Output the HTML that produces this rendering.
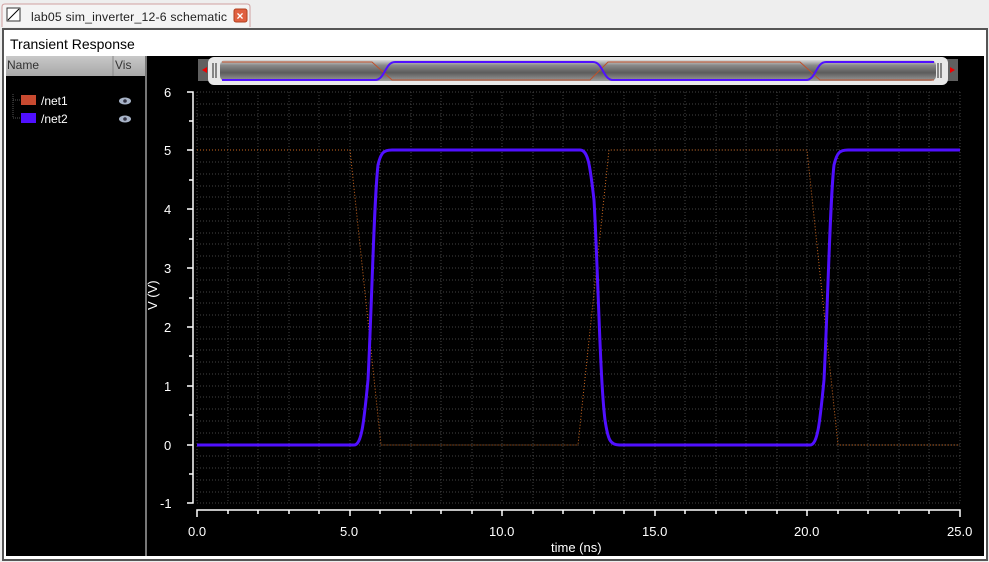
<!DOCTYPE html>
<html><head><meta charset="utf-8"><style>
body{margin:0;width:989px;height:562px;overflow:hidden;background:#eeeeee;font-family:"Liberation Sans",sans-serif}
</style></head><body>
<svg width="989" height="562" xmlns="http://www.w3.org/2000/svg" style="position:absolute;left:0;top:0" font-family="Liberation Sans, sans-serif">
<defs>
<linearGradient id="bar" x1="0" y1="0" x2="0" y2="1">
<stop offset="0" stop-color="#d8d8d8"/><stop offset="0.25" stop-color="#8a8a8a"/><stop offset="0.6" stop-color="#5c5c5c"/><stop offset="1" stop-color="#9a9a9a"/></linearGradient>
<linearGradient id="hdr" x1="0" y1="0" x2="0" y2="1"><stop offset="0" stop-color="#c8c8c8"/><stop offset="1" stop-color="#a8a8a8"/></linearGradient>
</defs>
<rect x="0" y="0" width="989" height="562" fill="#eeeeee"/>
<!-- tab -->
<path d="M2 27 V7 Q2 4 5 4 H247 Q250 4 250 7 V27" fill="#f4f4f4" stroke="#d0a0a0"/>
<rect x="7" y="8" width="13" height="13" fill="#fff" stroke="#333"/>
<line x1="8" y1="20" x2="19" y2="9" stroke="#000"/>
<text x="31" y="21" font-size="12.3" fill="#222" textLength="196">lab05 sim_inverter_12-6 schematic</text>
<rect x="234" y="9" width="13" height="13" rx="2" fill="#e06040" stroke="#b04020"/>
<text x="236.5" y="20" font-size="12" font-weight="bold" fill="#fff">×</text>
<!-- window -->
<rect x="3" y="29" width="984" height="531" fill="#fff" stroke="#555" stroke-width="2"/>
<text x="10" y="49" font-size="14" fill="#000">Transient Response</text>
<!-- left panel -->
<rect x="6" y="56" width="140" height="500" fill="#000"/>
<rect x="6" y="56" width="139" height="20" fill="url(#hdr)"/>
<line x1="113" y1="56" x2="113" y2="76" stroke="#888"/>
<text x="7" y="69" font-size="12" fill="#333">Name</text>
<text x="115" y="69" font-size="12" fill="#333">Vis</text>
<path d="M13 94 V118 M13 100 H20 M13 118 H20" stroke="#555" stroke-dasharray="1 1"/>
<rect x="21" y="95" width="15" height="10" fill="#c84a30"/>
<rect x="21" y="113" width="15" height="10" fill="#5010ff"/>
<text x="41" y="105" font-size="12" fill="#fff">/net1</text>
<text x="41" y="123" font-size="12" fill="#fff">/net2</text>
<ellipse cx="125" cy="101" rx="6" ry="3.5" fill="#a8b4c8"/><circle cx="125" cy="101" r="1.8" fill="#334"/>
<ellipse cx="125" cy="119" rx="6" ry="3.5" fill="#a8b4c8"/><circle cx="125" cy="119" r="1.8" fill="#334"/>
<rect x="145" y="56" width="2" height="500" fill="#777"/>
<!-- plot area -->
<rect x="147" y="56" width="837" height="500" fill="#000"/>
<!-- overview bar -->
<rect x="198" y="59" width="13" height="22" fill="#606060"/>
<path d="M202 70 L207 67 V73 Z" fill="#e00"/>
<rect x="945" y="59" width="13" height="22" fill="#606060"/>
<path d="M955 70 L950 67 V73 Z" fill="#e00"/>
<rect x="208" y="57" width="740" height="28" rx="6" fill="#e8e8e8"/>
<rect x="220" y="60" width="716" height="21" rx="5" fill="url(#bar)"/>
<line x1="213" y1="63" x2="213" y2="78" stroke="#222"/><line x1="216" y1="63" x2="216" y2="78" stroke="#222"/>
<line x1="938" y1="63" x2="938" y2="78" stroke="#222"/><line x1="941" y1="63" x2="941" y2="78" stroke="#222"/>
<path d="M222 62 H372 L392 80 H590 L608 62 H800 L820 80 H934" stroke="#c0502a" fill="none"/>
<path d="M222 80 H375 C385 80 385 62 395 62 H593 C603 62 603 80 613 80 H806 C816 80 816 62 826 62 H934" stroke="#5010ff" stroke-width="2" fill="none"/>
<!-- grid -->
<g stroke="#444" stroke-width="1" stroke-dasharray="1 2">
<path d="M197 92H960M197 104H960M197 115H960M197 127H960M197 139H960M197 150H960M197 162H960M197 174H960M197 186H960M197 197H960M197 209H960M197 221H960M197 233H960M197 244H960M197 256H960M197 268H960M197 280H960M197 292H960M197 303H960M197 315H960M197 327H960M197 339H960M197 350H960M197 362H960M197 374H960M197 386H960M197 397H960M197 409H960M197 421H960M197 433H960M197 445H960M197 456H960M197 468H960M197 480H960M197 492H960M197 503H960"/>
<path d="M197 92V503M228 92V503M258 92V503M289 92V503M319 92V503M350 92V503M380 92V503M411 92V503M441 92V503M472 92V503M502 92V503M533 92V503M563 92V503M594 92V503M624 92V503M655 92V503M685 92V503M716 92V503M746 92V503M777 92V503M807 92V503M838 92V503M868 92V503M899 92V503M929 92V503M960 92V503"/>
</g>
<!-- axes -->
<g stroke="#fff" stroke-width="1.5" fill="none">
<path d="M187 92 H193 V503 H187"/>
<path d="M187 150H193M187 209H193M187 268H193M187 327H193M187 386H193M187 445H193M189 121H193M189 180H193M189 239H193M189 298H193M189 356H193M189 415H193M189 474H193"/>
<path d="M197 517 V510 H960 V517"/>
<path d="M228 510v4M258 510v4M289 510v4M319 510v4M350 510v6M380 510v4M411 510v4M441 510v4M472 510v4M502 510v6M533 510v4M563 510v4M594 510v4M624 510v4M655 510v6M685 510v4M716 510v4M746 510v4M777 510v4M807 510v6M838 510v4M868 510v4M899 510v4M929 510v4"/>
</g>
<g fill="#fff" font-size="13">
<text x="164" y="97">6</text><text x="164" y="155">5</text><text x="164" y="214">4</text><text x="164" y="273">3</text><text x="164" y="332">2</text><text x="164" y="391">1</text><text x="164" y="450">0</text><text x="160" y="508">-1</text>
<text x="188" y="536">0.0</text><text x="340" y="536">5.0</text><text x="489" y="536">10.0</text><text x="642" y="536">15.0</text><text x="794" y="536">20.0</text><text x="947" y="536">25.0</text>
<text x="551" y="552">time (ns)</text>
<text transform="translate(157,310) rotate(-90)">V (V)</text>
</g>
<!-- net1 -->
<path d="M197 150 H350 L381 445 H578 L609 150 H807 L838 445 H960" stroke="#d06a20" stroke-width="1" stroke-dasharray="1 2" fill="none"/>
<!-- net2 -->
<path d="M197 445 H354 C362 445 364 420 368 380 C372 300 374 200 378 165 C381 152 384 150 392 150 H580 C588 150 590 165 594 200 C598 270 600 380 605 420 C608 440 610 445 620 445 H810 C818 445 820 420 824 380 C828 300 830 200 834 165 C837 152 840 150 848 150 H960" stroke="#5010ff" stroke-width="3" fill="none"/>
</svg>
</body></html>
